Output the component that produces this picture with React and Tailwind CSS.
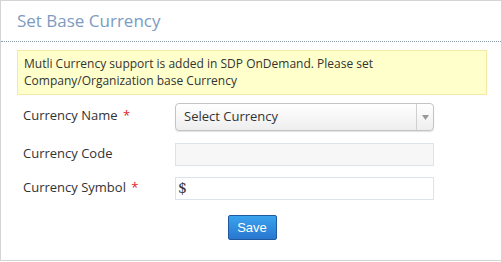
export default function App() {
  return (
    <div className="w-[501px] h-[262px] bg-white font-['Open_Sans',sans-serif] text-[#333]">
      <div className="h-[261px] border-t border-l border-b border-[#d4d4d4]">
        {/* header */}
        <div className="h-[41px] border-b border-dotted border-[#8a9aaa] pl-[16px] pt-[8px]">
          <h1 className="text-[17px] leading-[24px] text-[#7d9bbf]">Set Base Currency</h1>
        </div>

        <div className="px-[16px] pt-[8px]">
          <div className="bg-[#ffffcc] border border-[#f6e8a5] px-[6px] pt-[4px] pb-[5px] w-[470px] text-[12px] leading-[17px]">
            Mutli Currency support is added in SDP OnDemand. Please set Company/Organization base Currency
          </div>
        </div>

        <div className="pl-[22px] pt-[8px] text-[13px]">
          <div className="flex items-center h-[28px]">
            <div className="w-[152px] -mt-[2px]">
              Currency Name <span className="text-[#e0212a] ml-[2px]">*</span>
            </div>
            <div className="w-[259px] h-[28px] rounded-[4px] border border-[#c4c4c4] bg-gradient-to-b from-white to-[#eeeeee] shadow-[0_1px_1px_rgba(0,0,0,0.12)] flex items-center">
              <span className="flex-1 pl-[8px] text-[#333]">Select Currency</span>
              <div className="w-[17px] h-full border-l border-[#d0d0d0] flex items-center justify-center">
                <svg width="7" height="5" viewBox="0 0 7 5">
                  <path d="M0 0h7L3.5 5z" fill="#999" />
                </svg>
              </div>
            </div>
          </div>

          <div className="flex items-center h-[23px] mt-[12px]">
            <div className="w-[152px] -mt-[2px]">Currency Code</div>
            <div className="w-[259px] h-[23px] border border-[#dde3ea] bg-[#f7f7f7]" />
          </div>

          <div className="flex items-center h-[23px] mt-[11px]">
            <div className="w-[152px] -mt-[1px]">
              Currency Symbol <span className="text-[#e0212a] ml-[2px]">*</span>
            </div>
            <div className="w-[259px] h-[23px] border border-[#dde3ea] bg-white flex items-center pl-[2px] font-['DejaVu_Serif',serif] text-[14px]">
              $
            </div>
          </div>

          <div className="flex justify-center mt-[15px] pr-[20px]">
            <button className="w-[49px] h-[25px] rounded-[2px] border border-[#1f5a9e] bg-gradient-to-b from-[#3aa3ee] to-[#2a76cf] text-white text-[13px] font-['Liberation_Sans',sans-serif]">
              Save
            </button>
          </div>
        </div>
      </div>
    </div>
  );
}
